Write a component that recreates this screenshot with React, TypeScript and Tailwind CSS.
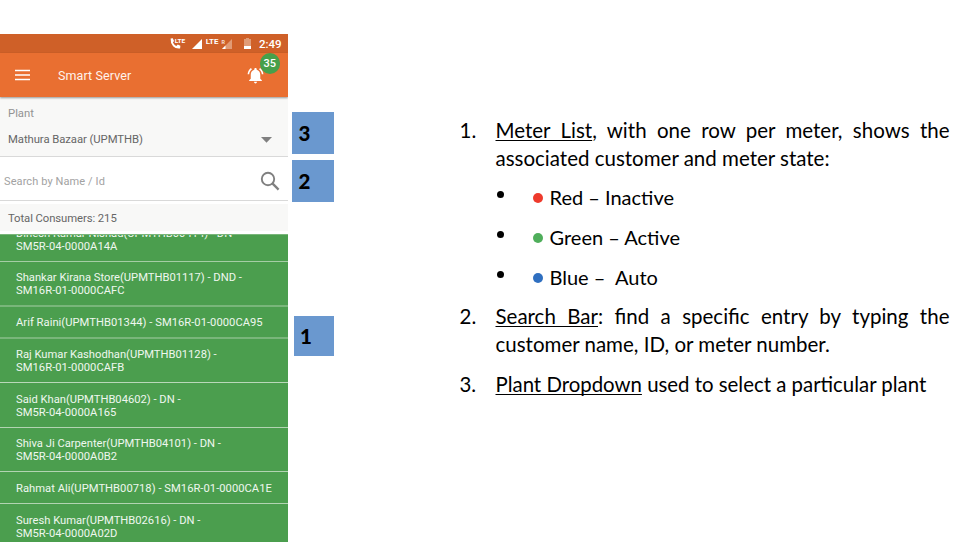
import type { ReactNode } from "react";

type Row = { h: string; lines: string[]; spacing: string[] };

const rows: Row[] = [
  { h: "h-[44px] border-t border-[#a5cda5]", lines: ["Shankar Kirana Store(UPMTHB01117) - DND -", "SM16R-01-0000CAFC"], spacing: ["tracking-normal", "tracking-[0.05px]"] },
  { h: "h-[32px] border-t-2 border-[#79b67a]", lines: ["Arif Raini(UPMTHB01344) - SM16R-01-0000CA95"], spacing: ["tracking-[0.03px]"] },
  { h: "h-[45px] border-t-2 border-[#79b67a]", lines: ["Raj Kumar Kashodhan(UPMTHB01128) -", "SM16R-01-0000CAFB"], spacing: ["tracking-normal", "tracking-[0.05px]"] },
  { h: "h-[45px] border-t border-[#b9d8b9]", lines: ["Said Khan(UPMTHB04602) - DN -", "SM5R-04-0000A165"], spacing: ["tracking-normal", "tracking-[0.05px]"] },
  { h: "h-[44px] border-t border-[#b2d4b2]", lines: ["Shiva Ji Carpenter(UPMTHB04101) - DN -", "SM5R-04-0000A0B2"], spacing: ["tracking-normal", "tracking-[0.05px]"] },
  { h: "h-[32px] border-t border-[#b2d4b2]", lines: ["Rahmat Ali(UPMTHB00718) - SM16R-01-0000CA1E"], spacing: ["tracking-[0.03px]"] },
  { h: "h-[45px] border-t border-[#b2d4b2]", lines: ["Suresh Kumar(UPMTHB02616) - DN -", "SM5R-04-0000A02D"], spacing: ["tracking-normal", "tracking-[0.05px]"] },
];

function StatusBar() {
  return (
    <div className="flex h-[19px] shrink-0 items-center bg-[#cf6028] pl-[169px] text-white">
      <svg width="84" height="19" viewBox="0 0 84 19" className="shrink-0">
        <path d="M1.600 4.600 3.800 4.300 5 6.900 3.900 8.500q1.200 2.400 3.400 3.400l1.500-1.300 2.600 1.200-.3 2.700q-4.400.6-7-2.300Q1.300 9 1.600 4.600Z" fill="#fff" />
        <text x="5.800" y="8.500" fontSize="6.200" fontWeight="700" fontFamily="Roboto, sans-serif" fill="#fff" textLength="10.500" lengthAdjust="spacingAndGlyphs">LTE</text>
        <path d="M33 5v10H23Z" fill="#fff" />
        <text x="36.700" y="10.300" fontSize="7.800" fontWeight="700" fontFamily="Roboto, sans-serif" fill="#fff" textLength="12.800" lengthAdjust="spacingAndGlyphs">LTE</text>
        <text x="52.500" y="9.500" fontSize="5.500" fontWeight="700" fontFamily="Roboto, sans-serif" fill="#f4ddcf">R</text>
        <path d="M63 5v10H53Z" fill="#e19b75" />
        <path d="M56.500 11.500V15H53Z" fill="#fff" />
        <path d="M77 4h3v1h2v10h-7V5h2Z" fill="#e19b75" />
        <path d="M75 12h7v3h-7Z" fill="#fff" />
      </svg>
      <span className="ml-[6px] mt-[2px] text-[11.5px] font-medium leading-none">2:49</span>
    </div>
  );
}

function AppBar() {
  return (
    <div className="relative z-10 flex h-[44px] shrink-0 items-center bg-[#e96f31] pl-[15px] shadow-[0_1px_2px_rgba(0,0,0,0.4)]">
      <svg width="15" height="12" viewBox="0 0 15 12">
        <path d="M0 1.500h15M0 6h15M0 10.500h15" stroke="#fff" strokeWidth="1.500" />
      </svg>
      <span className="ml-[28px] mt-[2px] text-[12.500px] leading-none tracking-[0.1px] text-[#fff3ec]">Smart Server</span>
      <svg width="19" height="19" viewBox="0 0 24 24" fill="#fff" className="ml-auto mr-[23px]">
        <path d="M7.580 4.080 6.150 2.650C3.750 4.480 2.170 7.300 2.030 10.500h2c.15-2.650 1.510-4.970 3.550-6.420zm12.390 6.420h2c-.15-3.200-1.730-6.020-4.120-7.850l-1.420 1.430c2.020 1.450 3.390 3.770 3.540 6.420zM18 11c0-3.070-1.640-5.640-4.500-6.320V4c0-.83-.67-1.500-1.500-1.500s-1.500.67-1.500 1.500v.68C7.630 5.360 6 7.920 6 11v5l-2 2v1h16v-1l-2-2v-5zm-6 11c1.100 0 2-.9 2-2h-4c0 1.100.9 2 2 2z" />
      </svg>
      <span className="absolute left-[259.500px] top-0 flex h-[20.500px] w-[20.500px] items-center justify-center rounded-full bg-[#46a04b] text-[11px] font-medium leading-none text-white">35</span>
    </div>
  );
}

function Phone() {
  return (
    <div className="mt-[34px] flex h-[508px] w-[288px] shrink-0 flex-col overflow-hidden bg-white font-[Roboto,sans-serif]">
      <StatusBar />
      <AppBar />
      <div className="flex h-[60px] shrink-0 flex-col border-b border-[#d9d9d9] bg-[#f8f8f7] pl-[8px] pt-[10px]">
        <span className="text-[11.300px] leading-[14px] text-[#939393]">Plant</span>
        <div className="mt-[12px] flex items-center justify-between pr-[16px]">
          <span className="text-[11.300px] leading-[14px] tracking-[-0.060px] text-[#666]">Mathura Bazaar (UPMTHB)</span>
          <svg width="11" height="6" viewBox="0 0 11 6" className="mb-[1px]"><path d="M0 0h11L5.500 5.700Z" fill="#808080" /></svg>
        </div>
      </div>
      <div className="flex h-[44px] shrink-0 items-center justify-between border-b border-[#d9d9d9] pl-[4px] pr-[8px] pt-[6px]">
        <span className="text-[11px] leading-[14px] tracking-[0.100px] text-[#a2a2a2]">Search by Name / Id</span>
        <svg width="20" height="20" viewBox="0 0 20 20" className="mb-[2px]" fill="none" stroke="#808080">
          <circle cx="8" cy="8" r="6.200" strokeWidth="1.900" />
          <path d="m12.400 12.400 6.200 6.200" strokeWidth="2.300" />
        </svg>
      </div>
      <div className="my-[3px] flex h-[27px] shrink-0 items-center bg-[#f8f8f7] pl-[8px] pt-[2px] text-[11.300px] leading-[14px] tracking-[-0.080px] text-[#666]">Total Consumers: 215</div>
      <div className="flex h-[27px] shrink-0 flex-col justify-end overflow-hidden border-t border-[#79b67a] bg-[#4b9e4e] pb-[8px] pl-[16px] text-[11.200px] leading-[13px] text-[#eff7ef]">
        <span className="tracking-normal">Dinesh Kumar Nishad(UPMTHB00414) - DN -</span>
        <span className="tracking-[0.050px]">SM5R-04-0000A14A</span>
      </div>
      {rows.map((r) => (
        <div key={r.lines[0]} className={`flex shrink-0 flex-col justify-center whitespace-nowrap bg-[#4b9e4e] pl-[16px] pt-[1px] text-[11.200px] leading-[13px] text-[#eff7ef] ${r.h}`}>
          {r.lines.map((l, i) => <span key={l} className={r.spacing[i]}>{l}</span>)}
        </div>
      ))}
    </div>
  );
}

function Item({ n, className, children }: { n: string; className: string; children: ReactNode }) {
  return (
    <div className={`flex ${className}`}>
      <span className="w-[36px] shrink-0">{n}</span>
      <div className="w-[454px] whitespace-nowrap">{children}</div>
    </div>
  );
}

function Term({ children }: { children: ReactNode }) {
  return <span className="underline decoration-1 underline-offset-[2px] [text-decoration-skip-ink:none]">{children}</span>;
}

const states = [
  { dot: "bg-[#ee3a2c]", text: "Red – Inactive" },
  { dot: "bg-[#4fae5b]", text: "Green – Active" },
  { dot: "bg-[#2f6fc0]", text: "Blue –  Auto" },
];

export default function App() {
  return (
    <div className="flex h-[542px] w-[958px] overflow-hidden bg-white">
      <Phone />
      <div className="flex w-[46px] shrink-0 flex-col items-end pt-[112px] font-[Lato,sans-serif] text-[20.500px] font-black text-black">
        <div className="flex h-[42px] w-[42px] items-center bg-[#6a98cf] pl-[6.500px] pt-[1px]">3</div>
        <div className="mt-[6px] flex h-[42px] w-[42px] items-center bg-[#6a98cf] pl-[6.500px]">2</div>
        <div className="mt-[114px] flex h-[40px] w-[40px] items-center bg-[#6a98cf] pl-[6px]">1</div>
      </div>
      <div className="ml-[125.500px] pt-[116px] font-[Lato,sans-serif] text-[20.500px] leading-[28px] text-black">
        <Item n="1." className="">
          <div className="[text-align-last:justify]"><Term>Meter List</Term>, with one row per meter, shows the</div>
          <div>associated customer and meter state:</div>
        </Item>
        <div className="mt-[11px] flex flex-col gap-[12px] pl-[37px] text-[20px]">
          {states.map((s) => (
            <div key={s.text} className="flex h-[28px] items-center">
              <span className="mb-[5px] h-[7px] w-[7px] rounded-full bg-black" />
              <span className={`ml-[29px] mt-[1px] h-[10px] w-[10px] rounded-full ${s.dot}`} />
              <span className="ml-[7px] whitespace-pre">{s.text}</span>
            </div>
          ))}
        </div>
        <Item n="2." className="mt-[11px]">
          <div className="[text-align-last:justify]"><Term>Search Bar</Term>: find a specific entry by typing the</div>
          <div>customer name, ID, or meter number.</div>
        </Item>
        <Item n="3." className="mt-[12px] text-[20.400px]">
          <Term>Plant Dropdown</Term> used to select a particular plant
        </Item>
      </div>
    </div>
  );
}
